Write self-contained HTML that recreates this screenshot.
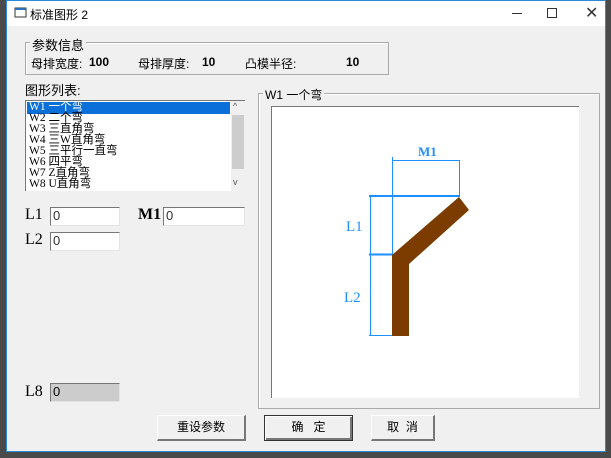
<!DOCTYPE html>
<html><head><meta charset="utf-8"><style>
body{margin:0;width:611px;height:458px;background:#4a4a4a;position:relative;overflow:hidden;font-family:"Liberation Sans","Noto Sans CJK SC",sans-serif;font-size:12px;color:#000}
.a{position:absolute}
#win{left:6px;top:0;width:598px;height:450px;background:#f0f0f0;border:1px solid #2b8ad8;}
#title{left:0;top:0;width:598px;height:25px;background:#fff}
.inp{position:absolute;background:#fff;border-top:1px solid #777;border-left:1px solid #777;border-right:1px solid #e3e3e3;border-bottom:1px solid #e3e3e3;box-sizing:border-box;font-size:13px;line-height:16px;padding-left:2px;color:#333}
.btn{position:absolute;box-sizing:border-box;border-top:1px solid #fff;border-left:1px solid #fff;border-right:2px solid #777;border-bottom:2px solid #777;background:#f0f0f0;text-align:center;font-size:12px;line-height:22px}
.lbl{position:absolute;font-family:"Liberation Serif","Noto Serif CJK SC",serif;font-size:16px}
.li{position:absolute;left:3px;font-size:11.5px;line-height:11px;white-space:nowrap;font-family:"Liberation Serif","Noto Sans CJK SC",serif}
</style></head><body>
<div id="win" class="a">
<div id="title" class="a">
 <svg class="a" style="left:7px;top:6px" width="14" height="12"><rect x="1" y="1" width="11" height="9" fill="#fff" stroke="#333"/><rect x="1" y="1" width="11" height="2" fill="#2a6ebd"/></svg>
 <div class="a" style="left:23px;top:5px;font-size:12px">标准图形 2</div>
 <div class="a" style="left:505px;top:12px;width:10px;height:1px;background:#333"></div>
 <div class="a" style="left:540px;top:7px;width:8px;height:8px;border:1px solid #333"></div>
 <div class="a" style="left:578px;top:2px;font-size:16px;color:#333">✕</div>
</div>
</div>
<!-- param group -->
<div class="a" style="left:25px;top:42px;width:362px;height:31px;border:1px solid #aaa;box-shadow:inset 1px 1px 0 #fff"></div>
<div class="a" style="left:30px;top:35px;background:#f0f0f0;padding:0 2px;font-size:13px">参数信息</div>
<div class="a" style="left:31px;top:55px;font-size:12px">母排宽度:</div>
<div class="a" style="left:89px;top:55px;font-size:12px;font-weight:bold">100</div>
<div class="a" style="left:138px;top:55px;font-size:12px">母排厚度:</div>
<div class="a" style="left:202px;top:55px;font-size:12px;font-weight:bold">10</div>
<div class="a" style="left:245px;top:55px;font-size:12px">凸模半径:</div>
<div class="a" style="left:346px;top:55px;font-size:12px;font-weight:bold">10</div>
<div class="a" style="left:25px;top:80px;font-size:13px">图形列表:</div>
<!-- listbox -->
<div class="a" style="left:25px;top:100px;width:220px;height:91px;background:#fff;border-top:1px solid #777;border-left:1px solid #777;box-sizing:border-box;overflow:hidden">
 <div class="a" style="left:1px;top:1px;width:203px;height:12px;background:#0a6fd8"></div>
 <div class="li" style="top:1px;color:#fff">W1 一个弯</div>
 <div class="li" style="top:12px">W2 二个弯</div>
 <div class="li" style="top:23px">W3 三直角弯</div>
 <div class="li" style="top:34px">W4 三W直角弯</div>
 <div class="li" style="top:45px">W5 三平行一直弯</div>
 <div class="li" style="top:56px">W6 四平弯</div>
 <div class="li" style="top:67px">W7 Z直角弯</div>
 <div class="li" style="top:78px">W8 U直角弯</div>
 <div class="a" style="left:205px;top:0;width:14px;height:90px;background:#f0f0f0"></div>
 <div class="a" style="left:206px;top:14px;width:12px;height:54px;background:#cdcdcd"></div>
 <div class="a" style="left:207px;top:0;font-size:9px;color:#555">^</div>
 <div class="a" style="left:207px;top:76px;font-size:9px;color:#555">v</div>
</div>
<div class="lbl" style="left:25px;top:206px">L1</div>
<div class="inp" style="left:50px;top:207px;width:70px;height:19px">0</div>
<div class="lbl" style="left:138px;top:206px;font-weight:bold">M1</div>
<div class="inp" style="left:163px;top:207px;width:82px;height:19px">0</div>
<div class="lbl" style="left:25px;top:231px">L2</div>
<div class="inp" style="left:50px;top:232px;width:70px;height:19px">0</div>
<div class="lbl" style="left:25px;top:383px">L8</div>
<div class="inp" style="left:50px;top:383px;width:70px;height:19px;background:#cccccc;color:#000">0</div>
<!-- right group -->
<div class="a" style="left:258px;top:93px;width:340px;height:314px;border:1px solid #aaa;box-shadow:inset 1px 1px 0 #fff"></div>
<div class="a" style="left:263px;top:86px;background:#f0f0f0;padding:0 2px;font-size:12px">W1 一个弯</div>
<div class="a" style="left:271px;top:106px;width:307px;height:291px;background:#fff;border-top:1px solid #777;border-left:1px solid #777"></div>
<svg class="a" style="left:0;top:0" width="611" height="458">
 <g stroke="#1e8fff" stroke-width="1" fill="none">
  <line x1="392.5" y1="157" x2="392.5" y2="255"/>
  <line x1="459.5" y1="160" x2="459.5" y2="196"/>
  <line x1="392" y1="160.5" x2="460" y2="160.5"/>
  <line x1="370.5" y1="196" x2="370.5" y2="336"/>
  <line x1="369" y1="196" x2="460" y2="196" stroke-width="2"/>
  <line x1="369" y1="254.5" x2="393" y2="254.5" stroke-width="2"/>
  <line x1="369" y1="335.5" x2="393" y2="335.5"/>
 </g>
 <polygon points="392,336 392,255 459,197 469,210 409,264 409,336" fill="#7c3c00"/>
 <g fill="#1e8fff" font-family="Liberation Serif,serif" font-size="15">
  <text x="418" y="156" font-weight="bold" font-size="13">M1</text>
  <text x="346" y="231">L1</text>
  <text x="344" y="302">L2</text>
 </g>
</svg>
<div class="btn" style="left:157px;top:415px;width:89px;height:26px">重设参数</div>
<div class="btn" style="left:264px;top:415px;width:89px;height:26px;border:1px solid #333;box-shadow:inset 1px 1px 0 #fff,inset -2px -2px 0 #777">确&nbsp;&nbsp;&nbsp;定</div>
<div class="btn" style="left:371px;top:415px;width:64px;height:26px">取&nbsp;&nbsp;消</div>
</body></html>
